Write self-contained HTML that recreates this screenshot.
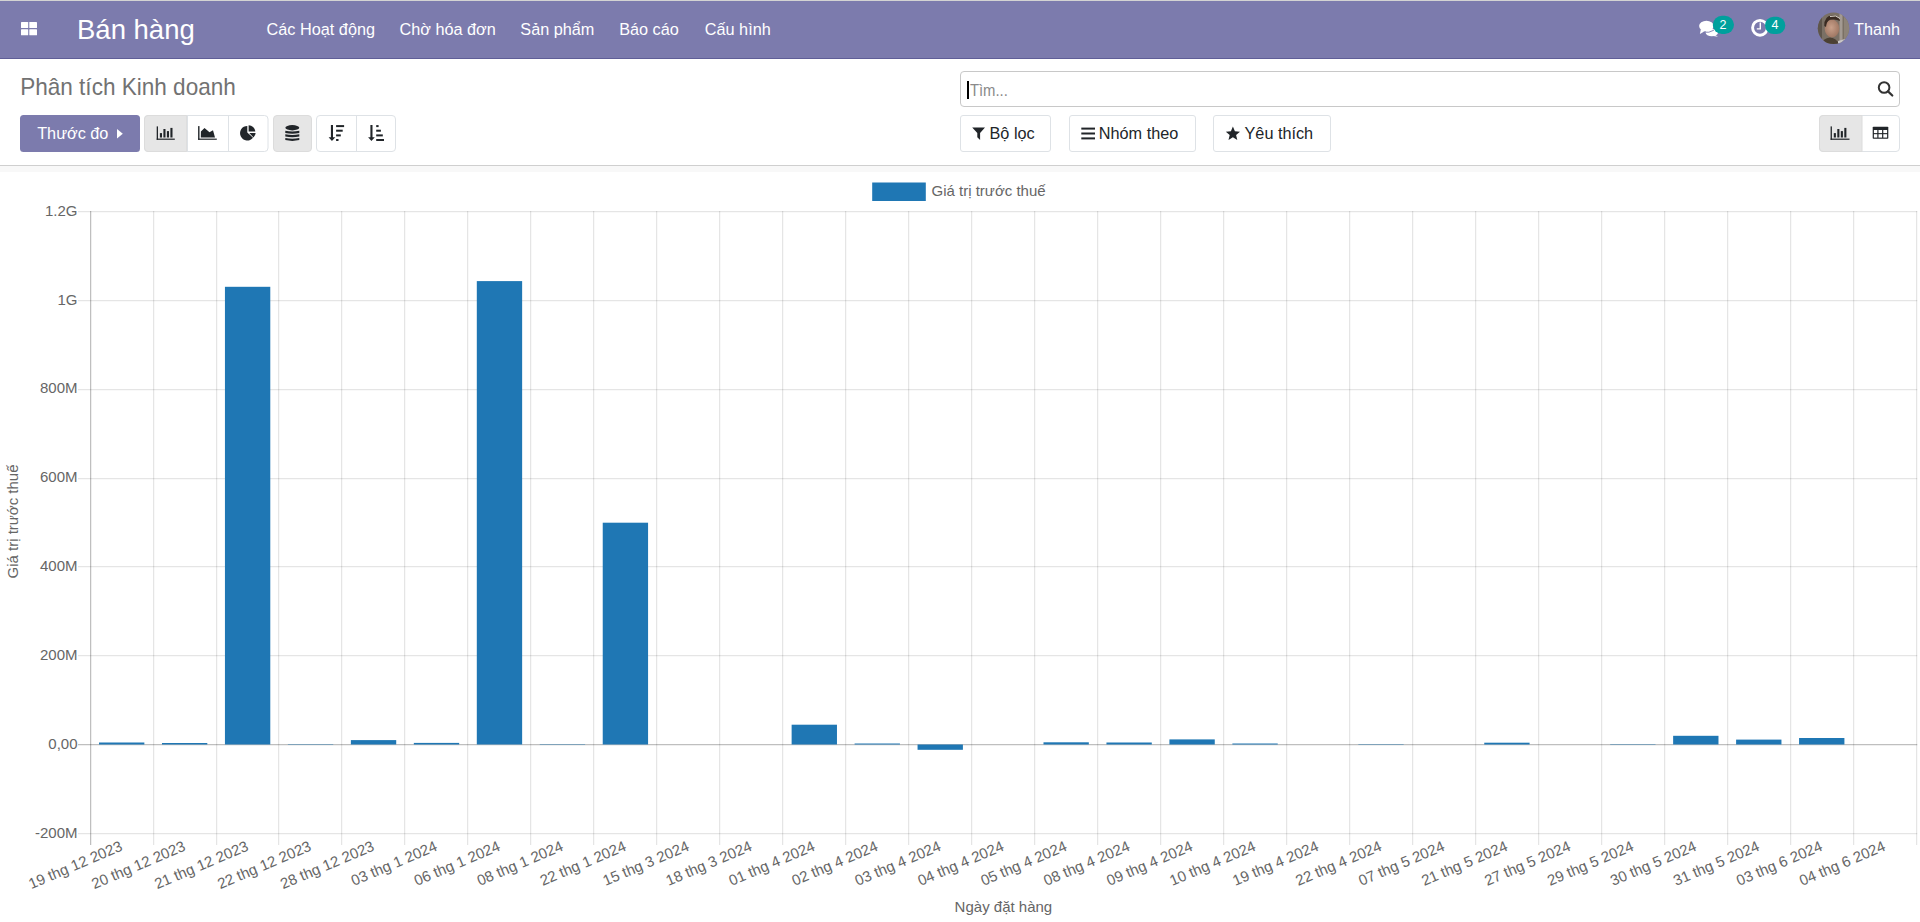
<!DOCTYPE html>
<html lang="vi"><head><meta charset="utf-8"><title>Phân tích Kinh doanh</title>
<style>
html,body{margin:0;padding:0;width:1920px;height:922px;overflow:hidden;background:#fff;font-family:"Liberation Sans", sans-serif;}
.abs{position:absolute;}
svg text{font-family:"Liberation Sans", sans-serif;}
</style></head><body>
<div class="abs" style="left:0;top:0;width:1920px;height:1px;background:#d3d3d3"></div>
<!-- NAVBAR -->
<div class="abs o_main_navbar" style="left:0;top:1px;width:1920px;height:57px;background:#7c7bad;border-bottom:1px solid #5f5e97"></div>
<svg class="abs" style="left:0;top:0" width="1920" height="60" viewBox="0 0 1920 60">
  <g fill="#fff">
    <rect x="21" y="22" width="7.2" height="6.1" rx="0.6"/>
    <rect x="29.3" y="22" width="7.7" height="6.1" rx="0.6"/>
    <rect x="21" y="29.2" width="7.2" height="6.1" rx="0.6"/>
    <rect x="29.3" y="29.2" width="7.7" height="6.1" rx="0.6"/>
  </g>
  <text x="77" y="38.8" font-size="27.5" fill="#fff">Bán hàng</text>
  <g font-size="16.25" fill="#fff">
    <text x="266.6" y="34.8">Các Hoạt động</text>
    <text x="399.5" y="34.8">Chờ hóa đơn</text>
    <text x="520.3" y="34.8">Sản phẩm</text>
    <text x="619.2" y="34.8">Báo cáo</text>
    <text x="704.8" y="34.8">Cấu hình</text>
    <text x="1854" y="34.8">Thanh</text>
  </g>
  <!-- comments icon -->
  <g fill="#fff">
    <ellipse cx="1706.4" cy="26.1" rx="7.3" ry="5.4"/>
    <path d="M1700.8 29.5 L1699.9 34 L1705 31 Z"/>
    <ellipse cx="1711.8" cy="32.6" rx="6.2" ry="3.7"/>
    <path d="M1714.3 34.6 L1718 36.7 L1711.5 35.8 Z"/>
  </g>
  <path d="M1703.6 32.2 Q1709 33.2 1713.9 30.2" stroke="#7c7bad" stroke-width="0.9" fill="none"/>
  <rect x="1712.8" y="15.7" width="21.2" height="18.3" rx="9.15" fill="#00a09d"/>
  <text x="1723" y="29" text-anchor="middle" font-size="12.5" fill="#fff">2</text>
  <!-- clock icon -->
  <circle cx="1760" cy="27.8" r="7.4" stroke="#fff" stroke-width="2.9" fill="none"/>
  <path d="M1760.3 22.6 V28.9 H1756.8" stroke="#fff" stroke-width="1.4" fill="none"/>
  <rect x="1765" y="16.8" width="20.3" height="17.2" rx="8.6" fill="#00a09d"/>
  <text x="1775" y="29" text-anchor="middle" font-size="12.5" fill="#fff">4</text>
  <!-- avatar -->
  <defs><clipPath id="av"><circle cx="1833.5" cy="28.3" r="15.7"/></clipPath>
  <radialGradient id="face" cx="0.45" cy="0.45" r="0.6"><stop offset="0" stop-color="#c9a08a"/><stop offset="1" stop-color="#9c7460"/></radialGradient></defs>
  <g clip-path="url(#av)">
    <rect x="1815" y="10" width="40" height="40" fill="#7a7065"/>
    <rect x="1815" y="10" width="7" height="40" fill="#5e554b"/>
    <rect x="1839.5" y="10" width="3" height="40" fill="#a39a92"/>
    <rect x="1844" y="10" width="10" height="40" fill="#8d8378"/>
    <path d="M1818 50 Q1820 39 1830 37.5 Q1838 38 1842 50 Z" fill="#4b4033"/>
    <path d="M1838 41 L1845 39 L1850 50 L1838 50 Z" fill="#c9c7c8"/>
    <ellipse cx="1832" cy="28.5" rx="7.3" ry="9" fill="url(#face)"/>
    <path d="M1824.3 26 Q1824 16 1832 15.5 Q1839.5 15.5 1840 21 Q1836 18.8 1830 19.8 Q1826.5 21 1826 27 Z" fill="#3a2b22"/>
    <path d="M1830 16.5 Q1836 14.5 1840 18.5" stroke="#d8d0c8" stroke-width="1" fill="none"/>
  </g>
</svg>

<!-- CONTROL PANEL -->
<div class="abs o_control_panel" style="left:0;top:59px;width:1920px;height:106px;background:#fff;border-bottom:1px solid #cfcfcf"></div>
<div class="abs" style="left:0;top:166px;width:1920px;height:6px;background:#f8f8f8"></div>
<svg class="abs" style="left:0;top:59px;overflow:visible" width="1920" height="107" viewBox="0 59 1920 107">
  <text x="20.2" y="95" font-size="24" textLength="215.6" lengthAdjust="spacingAndGlyphs" fill="#727272">Phân tích Kinh doanh</text>
  <!-- Thuoc do -->
  <rect x="20" y="115" width="120" height="37" rx="3.5" fill="#7c7bad"/>
  <text x="37.2" y="138.7" font-size="16.25" fill="#fff">Thước đo</text>
  <path d="M117 129 L122.8 133.7 L117 138.4 Z" fill="#fff"/>
  <!-- group 1 -->
  <rect x="144.5" y="115.5" width="123.5" height="36" rx="3.5" fill="#fff" stroke="#dee2e6"/>
  <path d="M148 115.5 H186.6 V151.5 H148 A3.5 3.5 0 0 1 144.5 148 V119 A3.5 3.5 0 0 1 148 115.5 Z" fill="#e6e6e6" stroke="#dcdcdc"/>
  <rect x="187" y="116" width="1" height="35" fill="#dee2e6"/>
  <rect x="228" y="116" width="1" height="35" fill="#dee2e6"/>
  <g fill="#212529">
    <rect x="156.7" y="126.4" width="1.3" height="13.4"/>
    <rect x="156.7" y="138.6" width="18.1" height="1.2"/>
    <rect x="159.9" y="133.1" width="2.1" height="4.4"/>
    <rect x="163.4" y="129" width="2.1" height="8.5"/>
    <rect x="166.9" y="131.1" width="2.1" height="6.4"/>
    <rect x="170.4" y="127.9" width="2.1" height="9.6"/>
    <rect x="198.1" y="126.1" width="1.4" height="13.7"/>
    <rect x="198.1" y="138.6" width="18.7" height="1.2"/>
    <path d="M200.8 137.5 L200.9 131.6 L204.5 127.9 L209.5 132.3 L213 130.2 L215 137.5 Z"/>
    <path d="M247.3 125.9 A7.3 7.3 0 1 0 253 137.8 L247.3 132.6 Z"/>
    <path d="M248.6 125.2 A7 7 0 0 1 255.3 131.5 L248.6 131.5 Z"/>
    <path d="M249.3 133 L255.6 133 A6.6 6.6 0 0 1 253.5 137.4 Z"/>
  </g>
  <!-- stacked -->
  <rect x="273.5" y="115.5" width="38" height="36" rx="3.5" fill="#e6e6e6" stroke="#dcdcdc"/>
  <ellipse cx="292.3" cy="127.75" rx="6.95" ry="2.65" fill="#212529"/>
  <path d="M285.3 130.7 Q292.3 132.3 299.3 130.7 V132.9 Q292.3 134.5 285.3 132.9 Z" fill="#212529"/>
  <path d="M285.3 134.3 Q292.3 135.9 299.3 134.3 V136.5 Q292.3 138.1 285.3 136.5 Z" fill="#212529"/>
  <path d="M285.3 137.9 Q292.3 139.5 299.3 137.9 V140.1 Q292.3 141.7 285.3 140.1 Z" fill="#212529"/>
  <!-- sort group -->
  <rect x="316.5" y="115.5" width="79" height="36" rx="3.5" fill="#fff" stroke="#dee2e6"/>
  <rect x="356" y="116" width="1" height="35" fill="#dee2e6"/>
  <g fill="#212529">
    <rect x="330.9" y="125" width="2.1" height="13"/>
    <path d="M328.6 137.2 H335.3 L331.95 141.1 Z"/>
    <rect x="336.1" y="125.1" width="8" height="2"/>
    <rect x="336.1" y="129.7" width="6.6" height="2"/>
    <rect x="336.1" y="134.4" width="4.7" height="2"/>
    <rect x="336.1" y="139" width="2.4" height="2"/>
    <rect x="370.4" y="125" width="2.1" height="13"/>
    <path d="M368.1 137.2 H374.8 L371.45 141.1 Z"/>
    <rect x="376.2" y="125.1" width="2.4" height="2"/>
    <rect x="376.2" y="129.7" width="4.7" height="2"/>
    <rect x="376.2" y="134.4" width="6.6" height="2"/>
    <rect x="376.2" y="139" width="7.8" height="2"/>
  </g>
  <!-- search -->
  <rect x="960.5" y="71.5" width="939" height="35" rx="3.5" fill="#fff" stroke="#c8c8c8"/>
  <rect x="967" y="81" width="2" height="18" fill="#000"/>
  <text x="969.9" y="95.9" font-size="16.25" textLength="38" lengthAdjust="spacingAndGlyphs" fill="#8a8a8a">Tìm...</text>
  <circle cx="1884.1" cy="87.5" r="5.3" stroke="#333" stroke-width="2" fill="none"/>
  <path d="M1888 91.4 L1892.3 95.5" stroke="#333" stroke-width="2.2" stroke-linecap="round"/>
  <!-- filter buttons -->
  <rect x="960.5" y="115.5" width="90" height="36" rx="2.5" fill="#fff" stroke="#dee2e6"/>
  <path d="M972.2 127.6 H985 L980.1 133 V140 L977.3 137.2 V133 Z" fill="#212529"/>
  <text x="989.5" y="138.9" font-size="16.25" fill="#212529">Bộ lọc</text>
  <rect x="1069.5" y="115.5" width="126" height="36" rx="2.5" fill="#fff" stroke="#dee2e6"/>
  <g fill="#212529">
    <rect x="1081.3" y="127.6" width="13.7" height="2"/>
    <rect x="1081.3" y="132.5" width="13.7" height="2"/>
    <rect x="1081.3" y="137.4" width="13.7" height="2"/>
  </g>
  <text x="1098.8" y="138.9" font-size="16.25" fill="#212529">Nhóm theo</text>
  <rect x="1213.5" y="115.5" width="117" height="36" rx="2.5" fill="#fff" stroke="#dee2e6"/>
  <path d="M1232.9 126.6 L1234.9 131.3 L1240 131.7 L1236.1 135 L1237.3 140 L1232.9 137.3 L1228.5 140 L1229.7 135 L1225.8 131.7 L1230.9 131.3 Z" fill="#212529"/>
  <text x="1244.5" y="138.9" font-size="16.25" fill="#212529">Yêu thích</text>
  <!-- view switcher -->
  <rect x="1819.5" y="115.5" width="80" height="36" rx="3.5" fill="#fff" stroke="#dee2e6"/>
  <path d="M1823 115.5 H1862 V151.5 H1823 A3.5 3.5 0 0 1 1819.5 148 V119 A3.5 3.5 0 0 1 1823 115.5 Z" fill="#e6e6e6" stroke="#dcdcdc"/>
  <g fill="#212529">
    <rect x="1830.6" y="126.4" width="1.3" height="13.4"/>
    <rect x="1830.6" y="138.6" width="18.9" height="1.2"/>
    <rect x="1833.8" y="133.1" width="2.1" height="4.4"/>
    <rect x="1837.3" y="129" width="2.1" height="8.5"/>
    <rect x="1840.8" y="131.1" width="2.1" height="6.4"/>
    <rect x="1844.3" y="127.9" width="2.1" height="9.6"/>
    <rect x="1872.7" y="126.8" width="15.6" height="12" rx="0.8"/>
  </g>
  <g fill="#fff">
    <rect x="1873.9" y="130" width="3.4" height="3.1"/>
    <rect x="1878.5" y="130" width="3.6" height="3.1"/>
    <rect x="1883.3" y="130" width="3.8" height="3.1"/>
    <rect x="1873.9" y="134.2" width="3.4" height="3.4"/>
    <rect x="1878.5" y="134.2" width="3.6" height="3.4"/>
    <rect x="1883.3" y="134.2" width="3.8" height="3.4"/>
  </g>
</svg>

<!-- GRAPH -->
<div class="abs o_graph" style="left:0;top:172px;width:1920px;height:750px;background:#fff"></div>
<svg class="abs" style="left:0;top:0" width="1920" height="922" viewBox="0 0 1920 922" shape-rendering="auto">
<rect x="78" y="211" width="1839.25" height="1.25" fill="rgba(0,0,0,0.1)"/>
<rect x="78" y="300" width="1839.25" height="1.25" fill="rgba(0,0,0,0.1)"/>
<rect x="78" y="389" width="1839.25" height="1.25" fill="rgba(0,0,0,0.1)"/>
<rect x="78" y="478" width="1839.25" height="1.25" fill="rgba(0,0,0,0.1)"/>
<rect x="78" y="566" width="1839.25" height="1.25" fill="rgba(0,0,0,0.1)"/>
<rect x="78" y="655" width="1839.25" height="1.25" fill="rgba(0,0,0,0.1)"/>
<rect x="78" y="744" width="1839.25" height="1.25" fill="rgba(0,0,0,0.25)"/>
<rect x="78" y="833" width="1839.25" height="1.25" fill="rgba(0,0,0,0.1)"/>
<rect x="90" y="211" width="1.25" height="634" fill="rgba(0,0,0,0.25)"/>
<rect x="153" y="211" width="1.25" height="634" fill="rgba(0,0,0,0.1)"/>
<rect x="216" y="211" width="1.25" height="634" fill="rgba(0,0,0,0.1)"/>
<rect x="278" y="211" width="1.25" height="634" fill="rgba(0,0,0,0.1)"/>
<rect x="341" y="211" width="1.25" height="634" fill="rgba(0,0,0,0.1)"/>
<rect x="404" y="211" width="1.25" height="634" fill="rgba(0,0,0,0.1)"/>
<rect x="467" y="211" width="1.25" height="634" fill="rgba(0,0,0,0.1)"/>
<rect x="530" y="211" width="1.25" height="634" fill="rgba(0,0,0,0.1)"/>
<rect x="593" y="211" width="1.25" height="634" fill="rgba(0,0,0,0.1)"/>
<rect x="656" y="211" width="1.25" height="634" fill="rgba(0,0,0,0.1)"/>
<rect x="719" y="211" width="1.25" height="634" fill="rgba(0,0,0,0.1)"/>
<rect x="782" y="211" width="1.25" height="634" fill="rgba(0,0,0,0.1)"/>
<rect x="845" y="211" width="1.25" height="634" fill="rgba(0,0,0,0.1)"/>
<rect x="908" y="211" width="1.25" height="634" fill="rgba(0,0,0,0.1)"/>
<rect x="971" y="211" width="1.25" height="634" fill="rgba(0,0,0,0.1)"/>
<rect x="1034" y="211" width="1.25" height="634" fill="rgba(0,0,0,0.1)"/>
<rect x="1097" y="211" width="1.25" height="634" fill="rgba(0,0,0,0.1)"/>
<rect x="1160" y="211" width="1.25" height="634" fill="rgba(0,0,0,0.1)"/>
<rect x="1223" y="211" width="1.25" height="634" fill="rgba(0,0,0,0.1)"/>
<rect x="1286" y="211" width="1.25" height="634" fill="rgba(0,0,0,0.1)"/>
<rect x="1349" y="211" width="1.25" height="634" fill="rgba(0,0,0,0.1)"/>
<rect x="1412" y="211" width="1.25" height="634" fill="rgba(0,0,0,0.1)"/>
<rect x="1475" y="211" width="1.25" height="634" fill="rgba(0,0,0,0.1)"/>
<rect x="1538" y="211" width="1.25" height="634" fill="rgba(0,0,0,0.1)"/>
<rect x="1601" y="211" width="1.25" height="634" fill="rgba(0,0,0,0.1)"/>
<rect x="1664" y="211" width="1.25" height="634" fill="rgba(0,0,0,0.1)"/>
<rect x="1727" y="211" width="1.25" height="634" fill="rgba(0,0,0,0.1)"/>
<rect x="1790" y="211" width="1.25" height="634" fill="rgba(0,0,0,0.1)"/>
<rect x="1853" y="211" width="1.25" height="634" fill="rgba(0,0,0,0.1)"/>
<rect x="1916" y="211" width="1.25" height="634" fill="rgba(0,0,0,0.1)"/>
<rect x="99.01" y="742.50" width="45.34" height="2.00" fill="#1f77b4"/>
<rect x="161.97" y="743.00" width="45.34" height="1.50" fill="#1f77b4"/>
<rect x="224.94" y="286.80" width="45.34" height="457.70" fill="#1f77b4"/>
<rect x="287.90" y="744.10" width="45.34" height="0.40" fill="#1f77b4"/>
<rect x="350.87" y="740.10" width="45.34" height="4.40" fill="#1f77b4"/>
<rect x="413.83" y="742.90" width="45.34" height="1.60" fill="#1f77b4"/>
<rect x="476.80" y="281.10" width="45.34" height="463.40" fill="#1f77b4"/>
<rect x="539.76" y="744.10" width="45.34" height="0.40" fill="#1f77b4"/>
<rect x="602.73" y="522.70" width="45.34" height="221.80" fill="#1f77b4"/>
<rect x="791.63" y="724.70" width="45.34" height="19.80" fill="#1f77b4"/>
<rect x="854.59" y="743.50" width="45.34" height="1.00" fill="#1f77b4"/>
<rect x="917.56" y="744.50" width="45.34" height="5.30" fill="#1f77b4"/>
<rect x="1043.49" y="742.30" width="45.34" height="2.20" fill="#1f77b4"/>
<rect x="1106.45" y="742.50" width="45.34" height="2.00" fill="#1f77b4"/>
<rect x="1169.42" y="739.40" width="45.34" height="5.10" fill="#1f77b4"/>
<rect x="1232.38" y="743.50" width="45.34" height="1.00" fill="#1f77b4"/>
<rect x="1358.32" y="744.10" width="45.34" height="0.40" fill="#1f77b4"/>
<rect x="1484.25" y="742.70" width="45.34" height="1.80" fill="#1f77b4"/>
<rect x="1610.18" y="744.10" width="45.34" height="0.40" fill="#1f77b4"/>
<rect x="1673.14" y="735.80" width="45.34" height="8.70" fill="#1f77b4"/>
<rect x="1736.11" y="739.60" width="45.34" height="4.90" fill="#1f77b4"/>
<rect x="1799.07" y="738.00" width="45.34" height="6.50" fill="#1f77b4"/>
<text x="77.5" y="215.80" text-anchor="end" font-size="15" fill="#666">1.2G</text>
<text x="77.5" y="304.63" text-anchor="end" font-size="15" fill="#666">1G</text>
<text x="77.5" y="393.46" text-anchor="end" font-size="15" fill="#666">800M</text>
<text x="77.5" y="482.29" text-anchor="end" font-size="15" fill="#666">600M</text>
<text x="77.5" y="571.12" text-anchor="end" font-size="15" fill="#666">400M</text>
<text x="77.5" y="659.95" text-anchor="end" font-size="15" fill="#666">200M</text>
<text x="77.5" y="748.78" text-anchor="end" font-size="15" fill="#666">0,00</text>
<text x="77.5" y="837.61" text-anchor="end" font-size="15" fill="#666">-200M</text>
<text transform="translate(121.67,846) rotate(-23)" x="0" y="4.4" text-anchor="end" font-size="15" fill="#666">19 thg 12 2023</text>
<text transform="translate(184.64,846) rotate(-23)" x="0" y="4.4" text-anchor="end" font-size="15" fill="#666">20 thg 12 2023</text>
<text transform="translate(247.60,846) rotate(-23)" x="0" y="4.4" text-anchor="end" font-size="15" fill="#666">21 thg 12 2023</text>
<text transform="translate(310.57,846) rotate(-23)" x="0" y="4.4" text-anchor="end" font-size="15" fill="#666">22 thg 12 2023</text>
<text transform="translate(373.53,846) rotate(-23)" x="0" y="4.4" text-anchor="end" font-size="15" fill="#666">28 thg 12 2023</text>
<text transform="translate(436.50,846) rotate(-23)" x="0" y="4.4" text-anchor="end" font-size="15" fill="#666">03 thg 1 2024</text>
<text transform="translate(499.47,846) rotate(-23)" x="0" y="4.4" text-anchor="end" font-size="15" fill="#666">06 thg 1 2024</text>
<text transform="translate(562.43,846) rotate(-23)" x="0" y="4.4" text-anchor="end" font-size="15" fill="#666">08 thg 1 2024</text>
<text transform="translate(625.40,846) rotate(-23)" x="0" y="4.4" text-anchor="end" font-size="15" fill="#666">22 thg 1 2024</text>
<text transform="translate(688.36,846) rotate(-23)" x="0" y="4.4" text-anchor="end" font-size="15" fill="#666">15 thg 3 2024</text>
<text transform="translate(751.33,846) rotate(-23)" x="0" y="4.4" text-anchor="end" font-size="15" fill="#666">18 thg 3 2024</text>
<text transform="translate(814.29,846) rotate(-23)" x="0" y="4.4" text-anchor="end" font-size="15" fill="#666">01 thg 4 2024</text>
<text transform="translate(877.26,846) rotate(-23)" x="0" y="4.4" text-anchor="end" font-size="15" fill="#666">02 thg 4 2024</text>
<text transform="translate(940.22,846) rotate(-23)" x="0" y="4.4" text-anchor="end" font-size="15" fill="#666">03 thg 4 2024</text>
<text transform="translate(1003.19,846) rotate(-23)" x="0" y="4.4" text-anchor="end" font-size="15" fill="#666">04 thg 4 2024</text>
<text transform="translate(1066.16,846) rotate(-23)" x="0" y="4.4" text-anchor="end" font-size="15" fill="#666">05 thg 4 2024</text>
<text transform="translate(1129.12,846) rotate(-23)" x="0" y="4.4" text-anchor="end" font-size="15" fill="#666">08 thg 4 2024</text>
<text transform="translate(1192.09,846) rotate(-23)" x="0" y="4.4" text-anchor="end" font-size="15" fill="#666">09 thg 4 2024</text>
<text transform="translate(1255.05,846) rotate(-23)" x="0" y="4.4" text-anchor="end" font-size="15" fill="#666">10 thg 4 2024</text>
<text transform="translate(1318.02,846) rotate(-23)" x="0" y="4.4" text-anchor="end" font-size="15" fill="#666">19 thg 4 2024</text>
<text transform="translate(1380.98,846) rotate(-23)" x="0" y="4.4" text-anchor="end" font-size="15" fill="#666">22 thg 4 2024</text>
<text transform="translate(1443.95,846) rotate(-23)" x="0" y="4.4" text-anchor="end" font-size="15" fill="#666">07 thg 5 2024</text>
<text transform="translate(1506.91,846) rotate(-23)" x="0" y="4.4" text-anchor="end" font-size="15" fill="#666">21 thg 5 2024</text>
<text transform="translate(1569.88,846) rotate(-23)" x="0" y="4.4" text-anchor="end" font-size="15" fill="#666">27 thg 5 2024</text>
<text transform="translate(1632.85,846) rotate(-23)" x="0" y="4.4" text-anchor="end" font-size="15" fill="#666">29 thg 5 2024</text>
<text transform="translate(1695.81,846) rotate(-23)" x="0" y="4.4" text-anchor="end" font-size="15" fill="#666">30 thg 5 2024</text>
<text transform="translate(1758.78,846) rotate(-23)" x="0" y="4.4" text-anchor="end" font-size="15" fill="#666">31 thg 5 2024</text>
<text transform="translate(1821.74,846) rotate(-23)" x="0" y="4.4" text-anchor="end" font-size="15" fill="#666">03 thg 6 2024</text>
<text transform="translate(1884.71,846) rotate(-23)" x="0" y="4.4" text-anchor="end" font-size="15" fill="#666">04 thg 6 2024</text>
<text x="1003.4" y="911.5" text-anchor="middle" font-size="15" fill="#666">Ngày đặt hàng</text>
<text transform="translate(18.3,521.5) rotate(-90)" x="0" y="0" text-anchor="middle" font-size="15" fill="#666">Giá trị trước thuế</text>
<rect x="872.2" y="182.5" width="53.6" height="18.5" fill="#1f77b4"/>
<text x="931.5" y="195.9" font-size="15" fill="#666">Giá trị trước thuế</text>
</svg>
</body></html>
